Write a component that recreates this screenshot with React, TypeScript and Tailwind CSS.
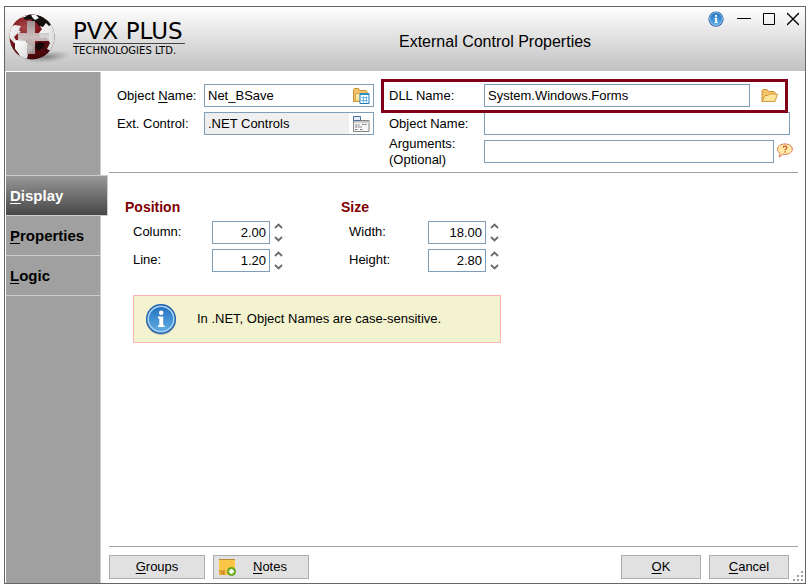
import React from 'react';

const FONT = "font-['Liberation_Sans',Arial,sans-serif]";

function Key({ text }: { text: string }) {
  return (
    <span>
      <span className="underline underline-offset-2">{text[0]}</span>
      {text.slice(1)}
    </span>
  );
}

function Globe() {
  return (
    <svg width="64" height="56" viewBox="0 0 64 56" aria-hidden="true">
      <defs>
        <radialGradient id="ball" cx="0.34" cy="0.28" r="0.8">
          <stop offset="0" stopColor="#a8474c" />
          <stop offset="0.4" stopColor="#7d151b" />
          <stop offset="1" stopColor="#3a0508" />
        </radialGradient>
        <linearGradient id="land" x1="0" y1="0" x2="1" y2="1">
          <stop offset="0" stopColor="#ffffff" />
          <stop offset="1" stopColor="#d2d2d2" />
        </linearGradient>
        <linearGradient id="cross" x1="0" y1="0" x2="0" y2="1">
          <stop offset="0" stopColor="#a39c9c" />
          <stop offset="0.5" stopColor="#d6d4d4" />
          <stop offset="1" stopColor="#a39c9c" />
        </linearGradient>
        <radialGradient id="shade">
          <stop offset="0" stopColor="#6f6f6f" stopOpacity="0.8" />
          <stop offset="1" stopColor="#8f8f8f" stopOpacity="0" />
        </radialGradient>
        <clipPath id="disc">
          <circle cx="27" cy="31" r="22.5" />
        </clipPath>
      </defs>
      <ellipse cx="42" cy="50" rx="24" ry="6" fill="url(#shade)" transform="rotate(-6 42 50)" />
      <g transform="translate(0 -1)">
        <circle cx="27" cy="31" r="22.5" fill="url(#ball)" />
        <g clipPath="url(#disc)">
          <path d="M39 10l7 3 6 12-1 13-5 7-4-2 3-6-4-6-6 1-1-5 3-4-3-4z" fill="url(#land)" />
          <path d="M18 10l6-3h11l8 5 4 6-3 2-3-3-3 4-4-1-3-4-3 1-2-4-6 1z" fill="#151010" />
          <path d="M14 9l5-1 4 1-3 2-5 1zM26 8l5 1 3 3-4 2-3-3z" fill="#f4f4f4" />
          <path d="M3 22l7-3 6 1-2 4 2 2-4 2-3 3 2 3 5 3-2 1-5-1-6-7z" fill="url(#land)" />
          <path d="M10 35l5-2 6 2 2 3 5 3-1 4-4 3-1 5-3 4-3-1-2-8-4-5z" fill="url(#land)" />
          <path d="M31 37l5-1 4 2-2 4-5 3-3-3z" fill="#160809" />
          <path d="M47 17l4 4 1 9-3-2z" fill="#c9c9c9" />
        </g>
        <path d="M22 15h8v12h14v8H30v13h-8V35h-9v-8h9z" fill="url(#cross)" fillOpacity="0.88" />
      </g>
    </svg>
  );
}

function InfoIcon({ size }: { size: number }) {
  return (
    <svg width={size} height={size} viewBox="0 0 32 32" aria-hidden="true">
      <defs>
        <linearGradient id="info" x1="0" y1="0" x2="0" y2="1">
          <stop offset="0" stopColor="#2270bf" />
          <stop offset="1" stopColor="#62aee6" />
        </linearGradient>
      </defs>
      <circle cx="16" cy="17" r="15" fill="#7d8590" fillOpacity="0.6" />
      <circle cx="16" cy="16" r="15" fill="#1f5fae" />
      <circle cx="16" cy="16" r="12.8" fill="url(#info)" stroke="#a8d4f5" strokeWidth="1.6" />
      <circle cx="16.2" cy="9.8" r="2.3" fill="#fff" />
      <path d="M13 13.500h5.200v8.700h1.300v1.800h-6.500v-1.800h1.300v-6.800H13z" fill="#fff" />
    </svg>
  );
}

function FolderGridIcon() {
  return (
    <svg width="17" height="16" viewBox="0 0 17 16" aria-hidden="true">
      <path d="M.5 13.500v-12l1-1h4l1.500 2h6l1 1v10z" fill="#f3c469" stroke="#c8913a" />
      <path d="M2.500 13V5.500h11V13z" fill="#fce7a8" stroke="#dba94c" />
      <path d="M7 5.500h9v10H7z" fill="#fff" stroke="#1d7fb5" />
      <path d="M7 5h9v2H7z" fill="#2b8fc4" />
      <path d="M8.500 9.500h6M8.500 12.500h6M10.500 8.500v6M13.500 8.500v6" stroke="#5fb0d8" />
    </svg>
  );
}

function FormIcon() {
  return (
    <svg width="17" height="16" viewBox="0 0 17 16" aria-hidden="true">
      <path d="M.5 4.500h15.500v11H.5z" fill="#f8f8f8" stroke="#858585" />
      <path d="M1 5h15v2H1z" fill="#c9c9c9" />
      <path d="M.5.5h7v4h-7z" fill="#e3eefa" stroke="#4a6f9e" />
      <path d="M2 9h5M9 8.500h5M2 11h7M2 13.500h3M7 13.500h3" stroke="#777" strokeDasharray="2 .6" />
    </svg>
  );
}

function FolderIcon() {
  return (
    <svg width="17" height="14" viewBox="0 0 17 14" aria-hidden="true">
      <path d="M1 12.500V1.500l1-1h4l1.500 2h5.500l1 1v3" fill="#f3c566" stroke="#c99136" />
      <path d="M1 12.500L4 6.500h3l1.500-1.500h8l-2.500 7.500z" fill="#fde39a" stroke="#d09c3e" />
    </svg>
  );
}

function HelpIcon() {
  return (
    <svg width="16" height="16" viewBox="0 0 17 16" aria-hidden="true">
      <path
        d="M8.500.5C4 .5.5 2.700.5 6c0 2 1 3.500 2.700 4.500L2.200 14.500 6.500 11.500c5 .8 9.800-1.500 9.800-5.500C16.300 2.700 13 .5 8.500.5z"
        fill="#ffe9a3"
        stroke="#d9735a"
      />
      <path d="M6.500 4.500c0-2.200 4-2.200 4 0 0 1.500-2 1.300-2 2.800" fill="none" stroke="#c9502c" strokeWidth="1.200" />
      <path d="M7.800 8.300h1.400v1.400H7.800z" fill="#c9502c" />
    </svg>
  );
}

function NoteIcon() {
  return (
    <svg width="17" height="17" viewBox="0 0 17 17" aria-hidden="true">
      <path d="M0 0h16v16H0z" fill="#f9c646" />
      <path d="M0 0h16v1H0z" fill="#b98a35" />
      <path d="M0 11h5v5H0z" fill="#f0ad35" />
      <path d="M1 11.500l4 4V11" fill="none" stroke="#a9701a" />
      <circle cx="12.500" cy="12.500" r="4" fill="#76b82a" stroke="#5a9d1b" />
      <path d="M12.500 10v5M10 12.500h5" stroke="#fff" strokeWidth="2" />
    </svg>
  );
}

function Spinner({ id, label, value }: { id: string; label: string; value: string }) {
  return (
    <div className="flex items-center">
      <label htmlFor={id} className="w-[79px] pb-0.5">{label}:</label>
      <input
        id={id}
        defaultValue={value}
        className="h-[23px] w-[58px] border border-[#7f9db9] bg-white px-[3px] text-right outline-none"
      />
      <div className="ml-1 flex flex-col gap-[7px]">
        <button type="button" aria-label={`Increase ${label}`}>
          <svg width="9" height="6" viewBox="0 0 9 6">
            <path d="M1 5l3.500-3.500L8 5" fill="none" stroke="#6b6b6b" strokeWidth="1.800" />
          </svg>
        </button>
        <button type="button" aria-label={`Decrease ${label}`}>
          <svg width="9" height="6" viewBox="0 0 9 6">
            <path d="M1 1l3.500 3.500L8 1" fill="none" stroke="#6b6b6b" strokeWidth="1.800" />
          </svg>
        </button>
      </div>
    </div>
  );
}

function Header() {
  return (
    <header className="flex h-16 items-start bg-linear-to-b from-white to-[#c1c1c1]">
      <Globe />
      <div className="mt-3 ml-1 w-28 whitespace-nowrap font-['DejaVu_Sans',sans-serif] text-black">
        <div className="border-b border-[#444] text-[23px] leading-6">PVX PLUS</div>
        <div className="text-[10px] leading-[14px]">TECHNOLOGIES LTD.</div>
      </div>
      <h1 className="mt-[26px] flex-1 pl-[214px] text-base leading-[18px]">External Control Properties</h1>
      <div className="mt-1 mr-1.5 flex items-center gap-3">
        <button type="button" aria-label="Information"><InfoIcon size={16} /></button>
        <button type="button" aria-label="Minimize">
          <svg width="15" height="16" viewBox="0 0 15 16"><path d="M1 7.500h14" stroke="#000" /></svg>
        </button>
        <button type="button" aria-label="Maximize">
          <svg width="12" height="16" viewBox="0 0 12 16"><path d="M.5 2.500h11v11H.5z" fill="none" stroke="#000" /></svg>
        </button>
        <button type="button" aria-label="Close">
          <svg width="12" height="16" viewBox="0 0 12 16"><path d="M0 2l12 12M12 2L0 14" stroke="#000" strokeWidth="1.300" /></svg>
        </button>
      </div>
    </header>
  );
}

function Sidebar() {
  const tab = 'h-10 border-b border-[#cdcdcd] pl-1 text-left text-[15px] font-bold';
  return (
    <nav className="mt-px ml-px flex w-[95px] shrink-0 flex-col border-r border-[#cdcdcd] bg-[#a0a0a0]">
      <div className="h-[103px]" />
      <button
        type="button"
        className="-mr-2 h-[41px] border border-l-0 border-[#cdcdcd] bg-linear-to-b from-[#999] to-[#484848] pl-1 text-left text-[15px] font-bold text-white"
      >
        <Key text="Display" />
      </button>
      <button type="button" className={tab}><Key text="Properties" /></button>
      <button type="button" className={tab}><Key text="Logic" /></button>
    </nav>
  );
}

function ControlForm() {
  const box = 'h-[23px] min-w-0 border border-[#7f9db9] bg-white px-[3px] outline-none';
  return (
    <form className="mr-[7px] ml-2 flex gap-[15px] border-b border-[#a0a0a0] pt-[13px] pr-[5px] pb-[9px] pl-2">
      <div className="flex flex-col gap-[5px]">
        <div className="flex items-center">
          <label htmlFor="object" className="w-[87px]">
            Object <span className="underline underline-offset-2">N</span>ame:
          </label>
          <div className="flex h-[23px] w-[170px] items-center border border-[#7f9db9]">
            <input id="object" defaultValue="Net_BSave" className="w-full min-w-0 flex-1 px-[3px] outline-none" />
            <button type="button" aria-label="Browse objects" className="mr-[3px]"><FolderGridIcon /></button>
          </div>
        </div>
        <div className="flex items-center">
          <label htmlFor="ext" className="w-[87px]">Ext. Control:</label>
          <div className="flex h-[23px] w-[170px] items-center border border-[#7f9db9]">
            <input id="ext" readOnly defaultValue=".NET Controls" className="h-full w-full min-w-0 flex-1 bg-[#efefef] px-[3px] outline-none" />
            <button type="button" aria-label="Control list" className="mr-[3px] ml-1"><FormIcon /></button>
          </div>
        </div>
      </div>

      <div className="flex min-w-0 flex-1 flex-col gap-[5px]">
        <div className="relative mr-[5px] flex items-center">
          <label htmlFor="dll" className="w-[95px] shrink-0">DLL Name:</label>
          <input id="dll" defaultValue="System.Windows.Forms" className={box + ' flex-1'} />
          <button type="button" aria-label="Browse DLL" className="flex w-[38px] justify-center"><FolderIcon /></button>
          <div className="pointer-events-none absolute -top-[5px] right-0 -bottom-1.5 -left-2 border-3 border-[#800018]" />
        </div>
        <div className="mr-[3px] flex items-center">
          <label htmlFor="name" className="w-[95px] shrink-0">Object Name:</label>
          <input id="name" className={box + ' flex-1'} />
        </div>
        <div className="flex h-[23px] items-center">
          <label htmlFor="args" className="w-[95px] shrink-0 leading-4">
            Arguments:<br />(Optional)
          </label>
          <input id="args" className={box + ' flex-1'} />
          <button type="button" aria-label="Help" className="ml-[3px] pb-0.5"><HelpIcon /></button>
        </div>
      </div>
    </form>
  );
}

function Footer() {
  const btn = 'h-6 border border-[#adadad] bg-[#e1e1e1]';
  return (
    <footer className="relative mt-auto pb-1 pl-2">
      <div className="mr-[7px] mb-2 border-t border-[#a0a0a0]" />
      <div className="mr-4 flex gap-2">
        <button type="button" className={btn + ' w-24'}><Key text="Groups" /></button>
        <button type="button" className={btn + ' flex w-24 items-center gap-[17px] pl-[5px]'}>
          <NoteIcon />
          <Key text="Notes" />
        </button>
        <button type="button" className={btn + ' ml-auto w-20'}><Key text="OK" /></button>
        <button type="button" className={btn + ' w-20'}><Key text="Cancel" /></button>
      </div>
      <svg className="absolute right-0.5 bottom-0.5" width="10" height="10" fill="#a0a0a0" aria-hidden="true">
        <path d="M8 0h2v2H8zM4 4h2v2H4zM8 4h2v2H8zM0 8h2v2H0zM4 8h2v2H4zM8 8h2v2H8z" />
      </svg>
    </footer>
  );
}

export default function App() {
  return (
    <div className={`${FONT} flex min-h-screen bg-white pt-1.5 pr-0.5 pb-[3px] pl-1 text-[13px] leading-4 text-black`}>
      <div className="flex flex-1 flex-col border border-[#666]">
        <Header />
        <div className="flex flex-1">
          <Sidebar />
          <main className="flex min-w-0 flex-1 flex-col">
            <ControlForm />

            <div className="flex gap-[58px] pt-[26px] pl-6">
              <section>
                <h2 className="mb-1.5 text-sm leading-4 font-bold text-[#800000]">Position</h2>
                <div className="flex flex-col gap-[5px] pl-2">
                  <Spinner id="column" label="Column" value="2.00" />
                  <Spinner id="line" label="Line" value="1.20" />
                </div>
              </section>
              <section>
                <h2 className="mb-1.5 text-sm leading-4 font-bold text-[#800000]">Size</h2>
                <div className="flex flex-col gap-[5px] pl-2">
                  <Spinner id="width" label="Width" value="18.00" />
                  <Spinner id="height" label="Height" value="2.80" />
                </div>
              </section>
            </div>

            <div className="mt-[23px] ml-8 flex h-12 w-[368px] items-center gap-5 border border-[#ffb0b0] bg-[#f4f3cf] pl-[11px]">
              <InfoIcon size={32} />
              <p>In .NET, Object Names are case-sensitive.</p>
            </div>

            <Footer />
          </main>
        </div>
      </div>
    </div>
  );
}
